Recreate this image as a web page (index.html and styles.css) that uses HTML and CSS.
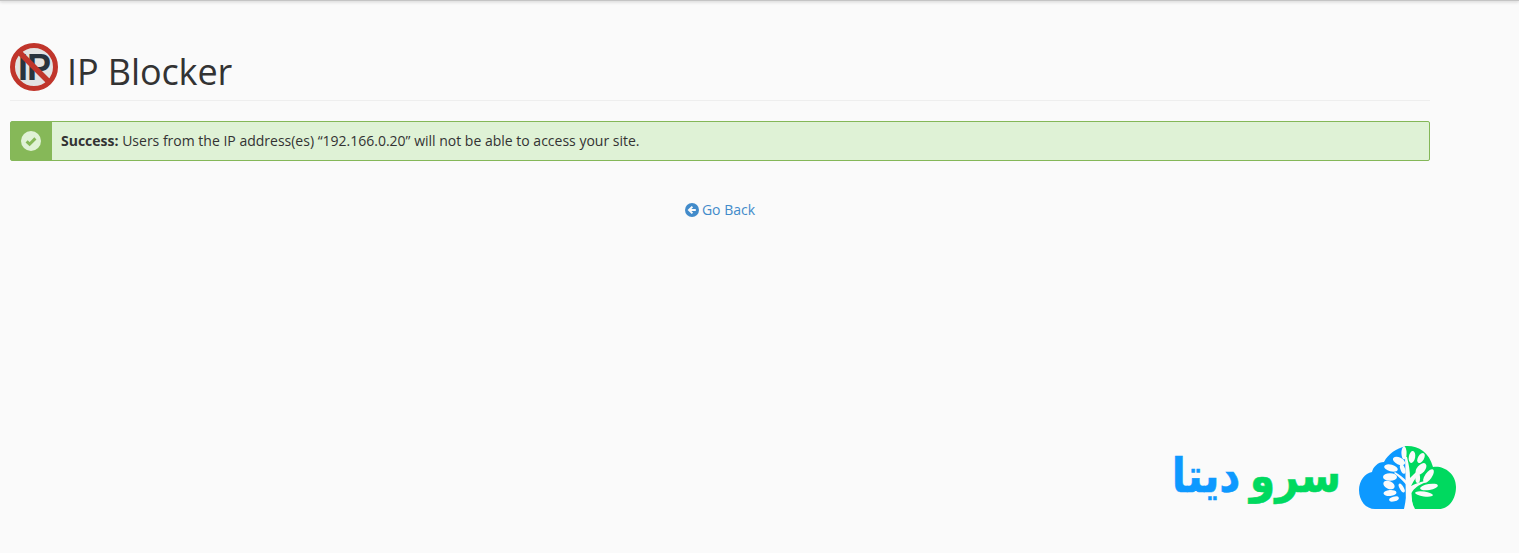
FILE: index.html
```html
<!DOCTYPE html>
<html lang="en">
<head>
<meta charset="utf-8">
<title>IP Blocker</title>
<link rel="stylesheet" href="styles.css">
</head>
<body>
<div class="topbar"></div>
<main class="content">
  <header class="page-header">
    <svg class="page-icon" viewBox="0 0 48 48" width="48" height="48" aria-hidden="true">
      <circle cx="24" cy="24" r="21.5" fill="#e3e3e3"/>
      <text class="ip-glyph" x="24" y="37" text-anchor="middle">IP</text>
      <path d="M8.5 8.5 L39.5 39.5" stroke="#c0352b" stroke-width="5.5"/>
      <circle cx="24" cy="24" r="21.5" fill="none" stroke="#c0352b" stroke-width="5"/>
    </svg>
    <h1 class="page-title">IP Blocker</h1>
  </header>
  <div class="alert">
    <div class="alert-side">
      <svg viewBox="0 0 20 20" width="20" height="20" aria-hidden="true">
        <circle cx="10" cy="10" r="10" fill="#e0f2d6"/>
        <path d="M5.6 10.3 L8.6 13.2 L14.4 7.4" fill="none" stroke="#86b858" stroke-width="3"/>
      </svg>
    </div>
    <p class="alert-text"><strong>Success:</strong> Users from the IP address(es) “192.166.0.20” will not be able to access your site.</p>
  </div>
  <div class="back-row">
    <a class="back-link" href="#">
      <svg viewBox="0 0 14 14" width="14" height="14" aria-hidden="true">
        <circle cx="7" cy="7" r="7" fill="#428bca"/>
        <path d="M7.4 3.6 L4 7 L7.4 10.4 M4.4 7 H10.8" fill="none" stroke="#fafafa" stroke-width="2"/>
      </svg>
      <span>Go Back</span>
    </a>
  </div>
</main>
<div class="brand">
  <div class="brand-name" dir="rtl"><span class="brand-green">سرو</span> <span class="brand-blue">دیتا</span></div>
  <svg class="brand-logo" viewBox="0 0 98 66" width="98" height="66" aria-hidden="true">
    <path d="M46 1.5 C38 3 29 9 25 17 C19 17 14 22 13 27 C6 28 0 36 0 45 C0 56 7 64 16 64 H47 Z" fill="#0d99ff"/>
    <path d="M46 1 C58 0 70 6 74 22 C84 20 97 28 97 42 C97 54 90 64 80 64 H54 Z" fill="#00d95f"/>
    <path d="M45 64 C47 55 48 48 47.5 40 C44 36 40 32 35 28 L36 27 C41 30 45 33 47.5 36 C48 28 47 20 46 12 L48 12 C50 20 51 26 51 33 C55 29 59 25 64 20 L65 21 C60 28 55 35 52 41 C56 39 60 37 66 36 L66 37.5 C60 40 55 43 52.5 48 C52.5 54 53 59 56 64 Z" fill="#fafafa"/>
    <g fill="#fafafa">
      <ellipse cx="45" cy="8" rx="2.6" ry="6.5"/>
      <ellipse cx="53" cy="12" rx="3.2" ry="6" transform="rotate(10 53 12)"/>
      <ellipse cx="62" cy="13" rx="3" ry="5.5" transform="rotate(30 62 13)"/>
      <ellipse cx="40" cy="16" rx="6.5" ry="3.6" transform="rotate(25 40 16)"/>
      <ellipse cx="43.7" cy="24" rx="2.3" ry="5" transform="rotate(-20 43.7 24)"/>
      <ellipse cx="32" cy="23" rx="7" ry="3.4" transform="rotate(15 32 23)"/>
      <ellipse cx="62" cy="24" rx="4" ry="7" transform="rotate(40 62 24)"/>
      <ellipse cx="31" cy="32" rx="7" ry="3.8"/>
      <ellipse cx="69.5" cy="31" rx="3.4" ry="8" transform="rotate(35 69.5 31)"/>
      <ellipse cx="58.7" cy="33" rx="2.4" ry="5"/>
      <ellipse cx="30" cy="40" rx="6" ry="3.8" transform="rotate(25 30 40)"/>
      <ellipse cx="42.7" cy="43" rx="2" ry="5" transform="rotate(-30 42.7 43)"/>
      <ellipse cx="70" cy="42" rx="9" ry="3" transform="rotate(-10 70 42)"/>
      <ellipse cx="31" cy="48" rx="6.5" ry="3" transform="rotate(-5 31 48)"/>
      <ellipse cx="65" cy="49" rx="9" ry="2.4" transform="rotate(8 65 49)"/>
      <ellipse cx="35" cy="54" rx="5" ry="2.4" transform="rotate(-15 35 54)"/>
    </g>
  </svg>
</div>
</body>
</html>
```
FILE: styles.css
```css
html, body {
  margin: 0;
  padding: 0;
  height: 553px;
  overflow: hidden;
  background: #fafafa;
  font-family: "Open Sans", sans-serif;
  color: #333;
}

.topbar {
  height: 1px;
  background: #c4c4c4;
  box-shadow: 0 1px 3px rgba(0, 0, 0, 0.3);
}

.content {
  width: 1420px;
  margin-left: 10px;
}

.page-header {
  display: flex;
  align-items: center;
  gap: 9px;
  height: 100px;
  padding-top: 42px;
  box-sizing: border-box;
  border-bottom: 1px solid #eee;
}

.page-icon {
  flex: none;
  margin-top: -10px;
}

.ip-glyph {
  font-family: "Liberation Sans", sans-serif;
  font-weight: 700;
  font-size: 36px;
  letter-spacing: -1px;
  fill: #29333d;
}

.page-title {
  margin: 0;
  font-size: 36px;
  font-weight: 400;
  line-height: 44px;
  letter-spacing: -0.1px;
}

.alert {
  display: flex;
  align-items: center;
  height: 40px;
  box-sizing: border-box;
  margin-top: 20px;
  background: #dff2d6;
  border: 1px solid #84b758;
  border-radius: 2px;
}

.alert-side {
  flex: none;
  display: flex;
  align-items: center;
  justify-content: center;
  width: 41px;
  height: 100%;
  background: #86b858;
  padding-right: 2px;
  box-sizing: border-box;
}

.alert-text {
  margin: 0 0 0 9px;
  font-size: 14px;
  line-height: 20px;
}

.back-row {
  display: flex;
  justify-content: center;
  margin-top: 39px;
}

.back-link {
  display: flex;
  align-items: center;
  gap: 3px;
  font-size: 14px;
  line-height: 20px;
  color: #428bca;
  text-decoration: none;
}

.brand {
  position: absolute;
  right: 62px;
  top: 445px;
  display: flex;
  align-items: center;
  gap: 18px;
}

.brand-name {
  font-family: "DejaVu Sans", sans-serif;
  font-weight: 700;
  font-size: 41px;
  line-height: 60px;
  word-spacing: -5px;
  white-space: nowrap;
  transform: scaleY(1.15);
  margin-top: -4px;
  -webkit-text-stroke: 0.5px;
}

.brand-green {
  color: #00d95f;
}

.brand-blue {
  color: #0d99ff;
}

.brand-logo {
  flex: none;
}
```
